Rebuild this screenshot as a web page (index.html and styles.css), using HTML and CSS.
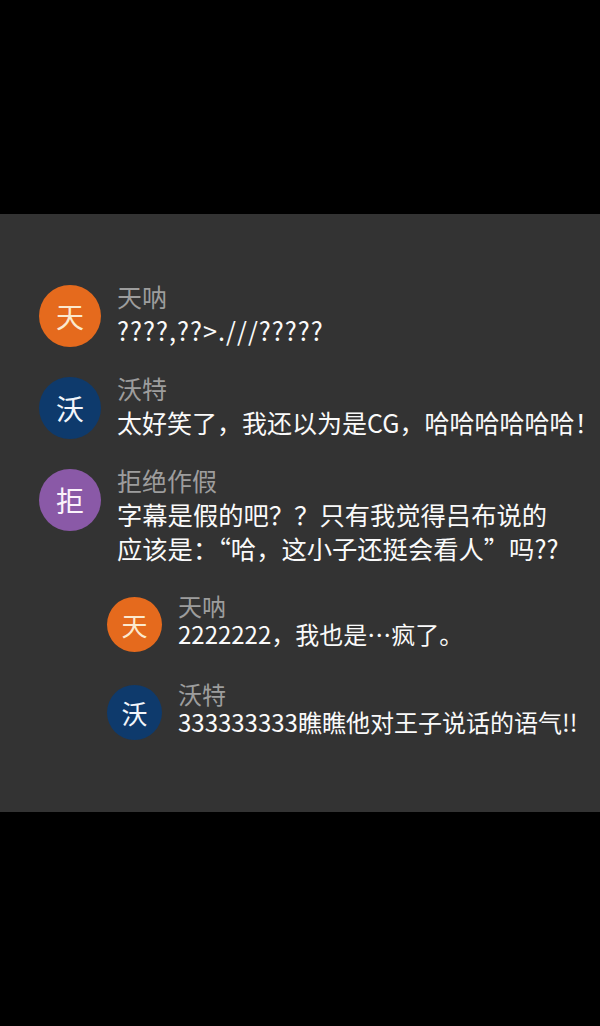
FILE: index.html
```html
<!DOCTYPE html>
<html lang="zh">
<head>
<meta charset="utf-8">
<link rel="stylesheet" href="styles.css">
</head>
<body>
<div class="top"></div>
<div class="panel">
  <div class="row">
    <div class="avatar orange">天</div>
    <div class="body">
      <div class="name">天呐</div>
      <div class="msg wide">????,??&gt;.///?????</div>
    </div>
  </div>
  <div class="row">
    <div class="avatar blue">沃</div>
    <div class="body">
      <div class="name">沃特</div>
      <div class="msg long">太好笑了，我还以为是CG，哈哈哈哈哈哈！</div>
    </div>
  </div>
  <div class="row">
    <div class="avatar purple">拒</div>
    <div class="body">
      <div class="name">拒绝作假</div>
      <div class="msg">字幕是假的吧？？只有我觉得吕布说的<br>应该是：“哈，这小子还挺会看人”吗??</div>
    </div>
  </div>
  <div class="replies">
    <div class="row small">
      <div class="avatar orange">天</div>
      <div class="body">
        <div class="name">天呐</div>
        <div class="msg">2222222，我也是…疯了。</div>
      </div>
    </div>
    <div class="row small">
      <div class="avatar blue">沃</div>
      <div class="body">
        <div class="name">沃特</div>
        <div class="msg">333333333瞧瞧他对王子说话的语气!!</div>
      </div>
    </div>
  </div>
</div>
<div class="bottom"></div>
</body>
</html>
```
FILE: styles.css
```css
html, body {
  margin: 0;
  padding: 0;
  background: #000;
  font-family: "Noto Sans CJK SC", "Noto Sans", sans-serif;
}
.top { height: 214px; }
.panel {
  background: #333333;
  padding: 65px 0 72px 39px;
  display: flex;
  flex-direction: column;
  gap: 24px;
}
.row {
  display: flex;
  align-items: flex-start;
  gap: 16px;
}
.body { flex: none; }
.avatar {
  width: 62px;
  height: 62px;
  border-radius: 50%;
  margin-top: 6px;
  flex: none;
  display: flex;
  align-items: center;
  justify-content: center;
  font-size: 28px;
  color: #fff;
  line-height: 1;
}
.orange { background: #e56a1d; color: #fbe9cf; }
.blue { background: #0e3a6c; color: #f2f6fb; }
.purple { background: #8a59a7; color: #faf3fb; }
.name {
  font-size: 25px;
  line-height: 34px;
  color: #9d9d9d;
}
.msg {
  font-size: 25.3px;
  line-height: 34px;
  color: #fafafa;
  white-space: nowrap;
}
.msg.wide { letter-spacing: 1px; }
.msg.long { font-size: 25px; }
.replies {
  margin-left: 68px;
  margin-top: 3px;
  display: flex;
  flex-direction: column;
  gap: 28px;
}
.small .avatar {
  width: 55px;
  height: 55px;
  margin-top: 5px;
  font-size: 26px;
}
.small .name, .small .msg {
  line-height: 28px;
  font-size: 24px;
}
.bottom { height: 214px; }
```
